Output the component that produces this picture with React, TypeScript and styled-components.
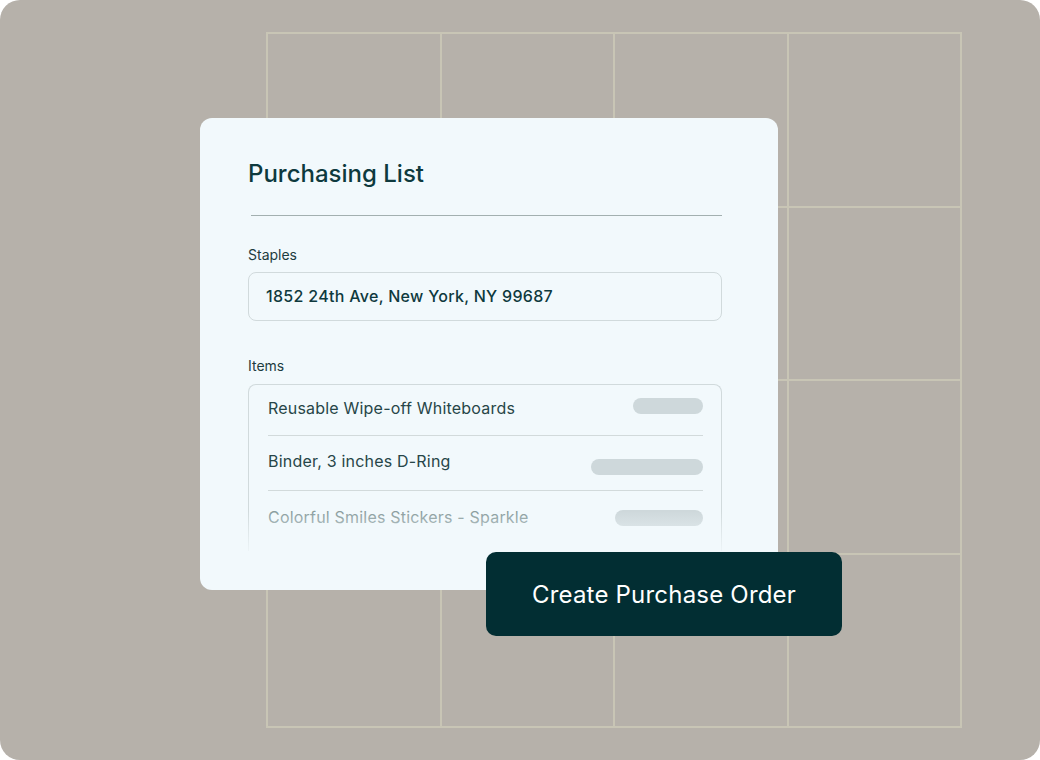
import React from 'react';
import styled, { createGlobalStyle } from 'styled-components';

const GlobalStyle = createGlobalStyle`
  html, body {
    margin: 0;
    padding: 0;
    background: #ffffff;
  }
  body {
    font-family: Inter, 'Noto Sans', sans-serif;
    -webkit-font-smoothing: antialiased;
  }
`;

const Stage = styled.div`
  position: relative;
  width: 1040px;
  height: 760px;
  background: #b6b1aa;
  border-radius: 20px;
  overflow: hidden;
`;

const Grid = styled.div`
  position: absolute;
  left: 266px;
  top: 32px;
  width: 696px;
  height: 696px;
  display: grid;
  grid-template-columns: repeat(4, 1fr);
  grid-template-rows: repeat(4, 1fr);
  border-top: 2px solid #c8c5b5;
  border-left: 2px solid #c8c5b5;
  box-sizing: border-box;
`;

const Cell = styled.div`
  border-right: 2px solid #c8c5b5;
  border-bottom: 2px solid #c8c5b5;
`;

const Card = styled.section`
  position: absolute;
  left: 200px;
  top: 118px;
  width: 578px;
  height: 472px;
  box-sizing: border-box;
  padding: 41px 56px 0 48px;
  background: #f2f9fc;
  border-radius: 12px;
  display: flex;
  flex-direction: column;
`;

const Title = styled.h2`
  margin: 0;
  font-size: 24px;
  line-height: 30px;
  font-weight: 500;
  color: #0e3a3e;
`;

const Divider = styled.hr`
  margin: 26px 0 0 3px;
  border: none;
  height: 1px;
  background: #a3b0b0;
`;

const Label = styled.div<{ $top: number }>`
  margin-top: ${(p) => p.$top}px;
  font-size: 14px;
  line-height: 18px;
  color: #1d3c3f;
`;

const Field = styled.div`
  margin-top: 8px;
  height: 49px;
  box-sizing: border-box;
  border: 1px solid #d1dadc;
  border-radius: 8px;
  padding: 0 17px 2px;
  display: flex;
  align-items: center;
  font-size: 16px;
  font-weight: 500;
  letter-spacing: 0.3px;
  color: #0f3a3e;
`;

const List = styled.div`
  position: relative;
  margin-top: 9px;
  height: 167px;
  box-sizing: border-box;
  border: 1px solid #d1dadc;
  border-bottom: none;
  border-radius: 8px 8px 0 0;
  padding: 0 18px 0 19px;

  &::after {
    content: '';
    position: absolute;
    left: -2px;
    right: -2px;
    bottom: 0;
    height: 40px;
    background: linear-gradient(rgba(242, 249, 252, 0), rgba(242, 249, 252, 0.85));
    pointer-events: none;
  }
`;

const Row = styled.div<{ $muted?: boolean }>`
  height: 55px;
  box-sizing: border-box;
  padding-bottom: 4px;
  display: flex;
  align-items: center;
  justify-content: space-between;
  border-bottom: 1px solid #d2dadb;
  font-size: 16px;
  letter-spacing: 0.2px;
  color: ${(p) => (p.$muted ? '#8a9d9e' : '#274648')};

  &:first-child {
    height: 51px;
  }
  &:last-child {
    border-bottom: none;
  }
`;

const Pill = styled.span<{ $width: number; $shift: number }>`
  width: ${(p) => p.$width}px;
  height: 16px;
  border-radius: 8px;
  background: #ced8db;
  transform: translateY(${(p) => p.$shift}px);
`;

const OrderButton = styled.button`
  position: absolute;
  left: 486px;
  top: 552px;
  width: 356px;
  height: 84px;
  border: none;
  border-radius: 10px;
  background: #022e33;
  color: #ffffff;
  font-family: Inter, 'Noto Sans', sans-serif;
  font-size: 24px;
  font-weight: 400;
  letter-spacing: 0.2px;
  cursor: pointer;
`;

const items = [
  { name: 'Reusable Wipe-off Whiteboards', bar: 70, shift: -2 },
  { name: 'Binder, 3 inches D-Ring', bar: 112, shift: 6 },
  { name: 'Colorful Smiles Stickers - Sparkle', bar: 88, shift: 1 },
];

export default function App() {
  return (
    <>
      <GlobalStyle />
      <Stage>
        <Grid>
          {Array.from({ length: 16 }).map((_, i) => (
            <Cell key={i} />
          ))}
        </Grid>
        <Card>
          <Title>Purchasing List</Title>
          <Divider />
          <Label $top={30}>Staples</Label>
          <Field>1852 24th Ave, New York, NY 99687</Field>
          <Label $top={36}>Items</Label>
          <List>
            {items.map((item, i) => (
              <Row key={item.name} $muted={i === items.length - 1}>
                {item.name}
                <Pill $width={item.bar} $shift={item.shift} />
              </Row>
            ))}
          </List>
        </Card>
        <OrderButton>Create Purchase Order</OrderButton>
      </Stage>
    </>
  );
}
